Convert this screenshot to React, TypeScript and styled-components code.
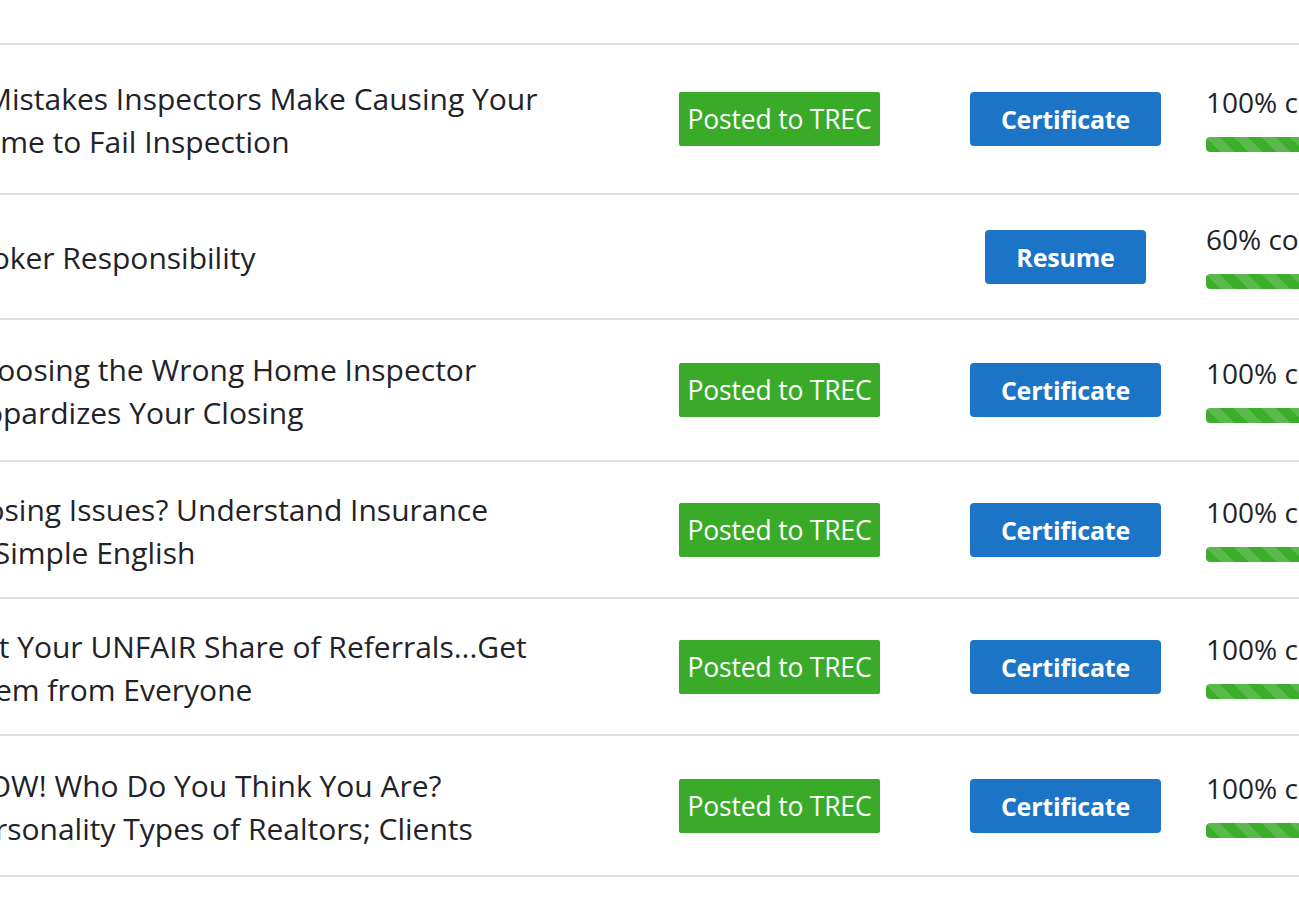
import React from "react";
import styled, { createGlobalStyle } from "styled-components";

const Global = createGlobalStyle`
  html, body { margin: 0; padding: 0; background: #ffffff; }
  body { overflow: hidden; font-family: "Open Sans", "Noto Sans", sans-serif; color: #212529; }
  * { box-sizing: border-box; }
`;

const Viewport = styled.div`
  width: 1299px;
  height: 909px;
  overflow: hidden;
  background: #ffffff;
`;

const Table = styled.div`
  margin-left: -40px;
  width: 1700px;
  display: flex;
  flex-direction: column;
`;

const HeaderSpacer = styled.div`
  height: 45px;
  border-bottom: 2px solid #dfe0e6;
`;

const Row = styled.div<{ $h: number }>`
  height: ${(p) => p.$h}px;
  border-bottom: 2px solid #dfe0e6;
  display: grid;
  grid-template-columns: 699px 281px 251px 1fr;
  align-items: center;
`;

const TitleCell = styled.div`
  font-size: 30px;
  line-height: 43px;
  color: #1f2329;
  white-space: nowrap;
  padding-top: 2px;
`;

const StatusCell = styled.div`
  padding-left: 20px;
  display: flex;
`;

const ActionCell = styled.div`
  display: flex;
  justify-content: center;
`;

const ProgressCell = styled.div`
  padding-left: 15px;
  padding-bottom: 6px;
  display: flex;
  flex-direction: column;
`;

const Badge = styled.span`
  width: 201px;
  height: 54px;
  background: #3aab28;
  color: #ffffff;
  font-size: 26.5px;
  letter-spacing: -0.2px;
  display: flex;
  align-items: center;
  justify-content: center;
  border-radius: 2px;
`;

const Button = styled.button<{ $w: number }>`
  width: ${(p) => p.$w}px;
  height: 54px;
  border: none;
  border-radius: 4px;
  background: #1c74c7;
  color: #ffffff;
  font-family: "Open Sans", "Noto Sans", sans-serif;
  font-weight: 700;
  font-size: 25px;
  letter-spacing: -0.2px;
  display: flex;
  align-items: center;
  justify-content: center;
  cursor: pointer;
`;

const ProgressLabel = styled.div`
  font-size: 28px;
  line-height: 42px;
  color: #1f2329;
  white-space: nowrap;
`;

const Track = styled.div`
  margin-top: 14px;
  width: 420px;
  height: 15px;
  border-radius: 4px;
  background: #e9ecef;
  overflow: hidden;
`;

const Fill = styled.div`
  height: 100%;
  background-color: #3cae2b;
  background-image: linear-gradient(
    45deg,
    rgba(255, 255, 255, 0.15) 25%,
    transparent 25%,
    transparent 50%,
    rgba(255, 255, 255, 0.15) 50%,
    rgba(255, 255, 255, 0.15) 75%,
    transparent 75%,
    transparent
  );
  background-size: 28px 28px;
  border-radius: 4px;
`;

type Course = {
  h: number;
  title: string[];
  posted: boolean;
  action: "Certificate" | "Resume";
  pct: number;
};

const courses: Course[] = [
  { h: 150, title: ["5 Mistakes Inspectors Make Causing Your", "Home to Fail Inspection"], posted: true, action: "Certificate", pct: 100 },
  { h: 125, title: ["Broker Responsibility"], posted: false, action: "Resume", pct: 60 },
  { h: 142, title: ["Choosing the Wrong Home Inspector", "Jeopardizes Your Closing"], posted: true, action: "Certificate", pct: 100 },
  { h: 137, title: ["Closing Issues? Understand Insurance", "in Simple English"], posted: true, action: "Certificate", pct: 100 },
  { h: 137, title: ["Get Your UNFAIR Share of Referrals...Get", "Them from Everyone"], posted: true, action: "Certificate", pct: 100 },
  { h: 141, title: ["WOW! Who Do You Think You Are?", "Personality Types of Realtors; Clients"], posted: true, action: "Certificate", pct: 100 },
];

export default function App() {
  return (
    <Viewport>
      <Global />
      <Table>
        <HeaderSpacer />
        {courses.map((c, i) => (
          <Row key={i} $h={c.h}>
            <TitleCell>
              {c.title.map((l, j) => (
                <div key={j}>{l}</div>
              ))}
            </TitleCell>
            <StatusCell>{c.posted && <Badge>Posted to TREC</Badge>}</StatusCell>
            <ActionCell>
              <Button $w={c.action === "Certificate" ? 191 : 161}>{c.action}</Button>
            </ActionCell>
            <ProgressCell>
              <ProgressLabel>{c.pct}% complete</ProgressLabel>
              <Track>
                <Fill style={{ width: `${c.pct}%` }} />
              </Track>
            </ProgressCell>
          </Row>
        ))}
      </Table>
    </Viewport>
  );
}
